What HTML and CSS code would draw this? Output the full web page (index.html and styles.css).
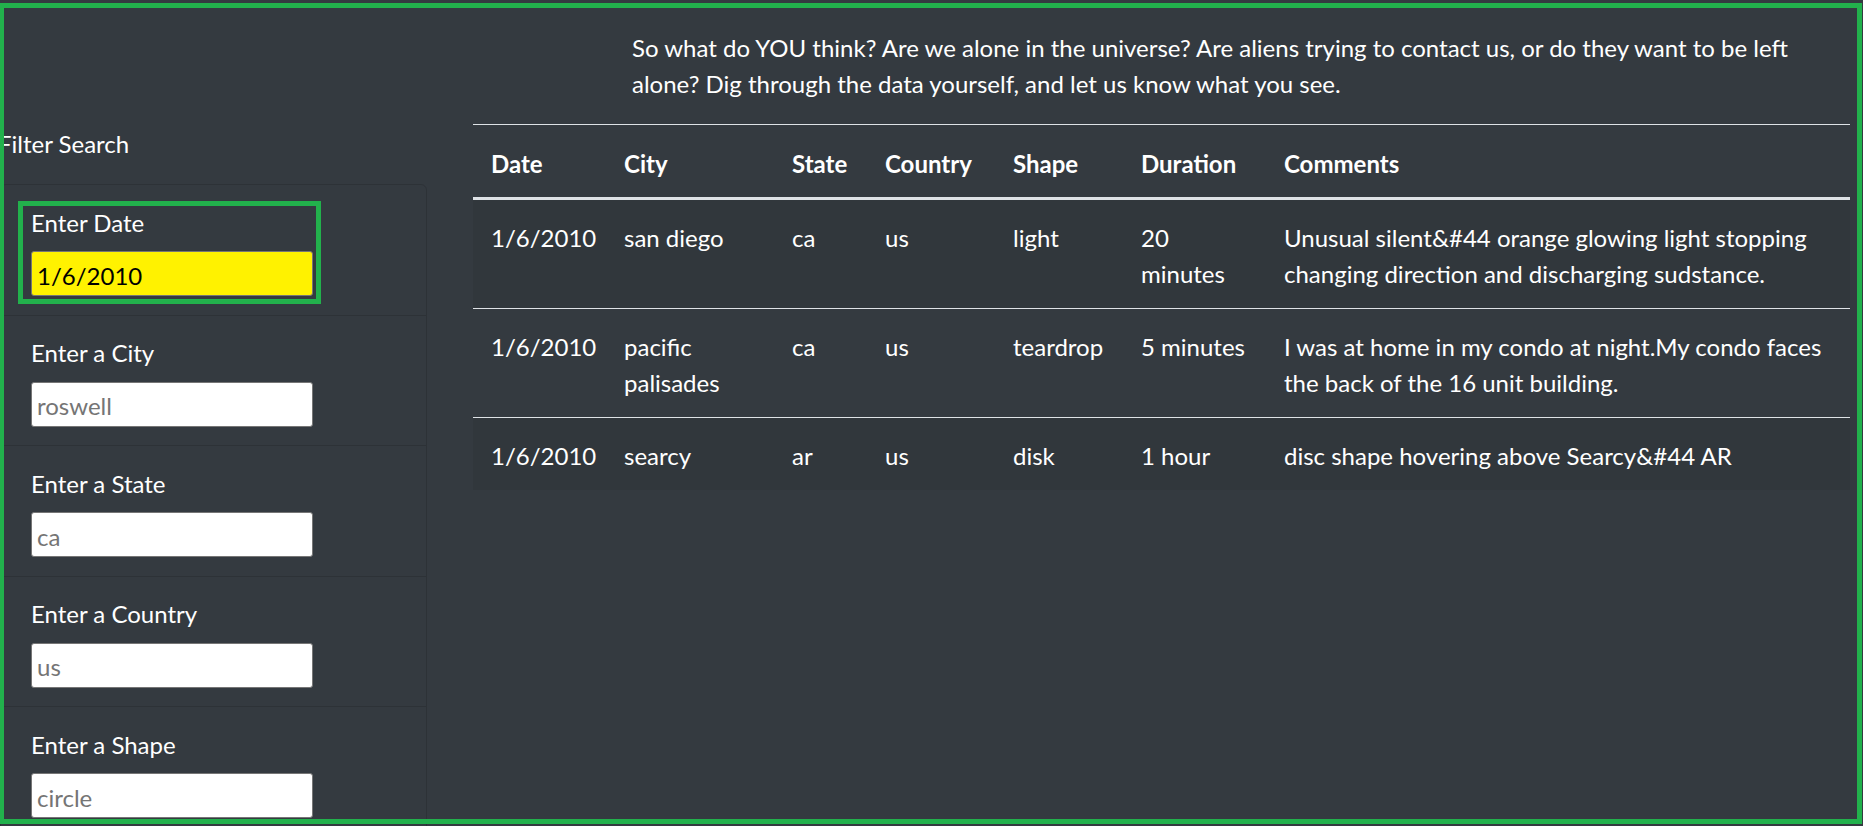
FILE: index.html
```html
<!DOCTYPE html>
<html lang="en">
<head>
<meta charset="utf-8">
<title>UFO Sightings</title>
<link rel="stylesheet" href="styles.css">
</head>
<body>
<div class="page">
  <aside class="sidebar">
    <p class="filter-title">Filter Search</p>
    <ul class="filters">
      <li class="filter filter-first">
        <label for="datetime">Enter Date</label>
        <input id="datetime" class="date-input" type="text" value="1/6/2010">
        <span class="highlight"></span>
      </li>
      <li class="filter">
        <label for="city">Enter a City</label>
        <input id="city" type="text" placeholder="roswell">
      </li>
      <li class="filter">
        <label for="state">Enter a State</label>
        <input id="state" type="text" placeholder="ca">
      </li>
      <li class="filter">
        <label for="country">Enter a Country</label>
        <input id="country" type="text" placeholder="us">
      </li>
      <li class="filter">
        <label for="shape">Enter a Shape</label>
        <input id="shape" type="text" placeholder="circle">
      </li>
    </ul>
  </aside>
  <main class="main">
    <p class="intro">So what do YOU think? Are we alone in the universe? Are aliens trying to contact us, or do they want to be left alone? Dig through the data yourself, and let us know what you see.</p>
    <table class="ufo-table">
      <colgroup>
        <col class="c-date"><col class="c-city"><col class="c-state"><col class="c-country"><col class="c-shape"><col class="c-duration"><col class="c-comments">
      </colgroup>
      <thead>
        <tr>
          <th>Date</th><th>City</th><th>State</th><th>Country</th><th>Shape</th><th>Duration</th><th>Comments</th>
        </tr>
      </thead>
      <tbody>
        <tr>
          <td>1/6/2010</td><td>san diego</td><td>ca</td><td>us</td><td>light</td><td>20 minutes</td><td>Unusual silent&amp;#44 orange glowing light stopping changing direction and discharging sudstance.</td>
        </tr>
        <tr>
          <td>1/6/2010</td><td>pacific palisades</td><td>ca</td><td>us</td><td>teardrop</td><td>5 minutes</td><td>I was at home in my condo at night.My condo faces the back of the 16 unit building.</td>
        </tr>
        <tr>
          <td>1/6/2010</td><td>searcy</td><td>ar</td><td>us</td><td>disk</td><td>1 hour</td><td>disc shape hovering above Searcy&amp;#44 AR</td>
        </tr>
      </tbody>
    </table>
  </main>
</div>
<div class="frame"></div>
</body>
</html>
```

FILE: styles.css
```css
* { box-sizing: border-box; }

html, body {
  margin: 0;
  height: 100%;
  overflow: hidden;
}

body {
  background: #343a40;
  color: #ffffff;
  font-family: Lato, "Open Sans", sans-serif;
  font-size: 24px;
  line-height: 36px;
}

.page {
  display: flex;
  align-items: flex-start;
}

.sidebar {
  width: 427px;
  flex: none;
  padding-top: 125.5px;
}

.filter-title {
  margin: 0 0 22.5px -2px;
}

.filters {
  list-style: none;
  margin: 0;
  padding: 0;
  border: 1px solid rgba(0, 0, 0, 0.13);
  border-radius: 6px;
}

.filter {
  position: relative;
  padding: 19.5px 30px 18.5px;
  border-top: 1px solid rgba(0, 0, 0, 0.13);
}

.filter-first {
  border-top: 0;
}

.filter label {
  display: block;
  margin-bottom: 10.5px;
}

.filter input {
  display: block;
  width: 282px;
  height: 45px;
  margin: 0;
  padding: 5px 5px 2px;
  border: 1px solid #767676;
  border-radius: 3px;
  background: #ffffff;
  color: #000000;
  font: inherit;
  line-height: 36px;
  outline: none;
}

.filter input::placeholder {
  color: #757575;
}

.filter .date-input {
  background: #fff200;
}

.highlight {
  position: absolute;
  left: 17px;
  top: 16px;
  width: 303px;
  height: 103px;
  border: 5px solid #22b14c;
  pointer-events: none;
}

.main {
  flex: none;
  width: 1377px;
  margin-left: 46px;
}

.intro {
  margin: 29.5px 0 22.5px;
  padding-left: 159px;
  width: 1350px;
}

.ufo-table {
  width: 1377px;
  table-layout: fixed;
  border-collapse: collapse;
}

.c-date { width: 133px; }
.c-city { width: 168px; }
.c-state { width: 93px; }
.c-country { width: 128px; }
.c-shape { width: 128px; }
.c-duration { width: 143px; }
.c-comments { width: 584px; }

.ufo-table th,
.ufo-table td {
  padding: 19.5px 18px 16.5px;
  text-align: left;
  vertical-align: top;
  border-top: 1.5px solid #dee2e6;
}

.ufo-table th {
  padding-top: 20.5px;
  padding-bottom: 15.5px;
  font-weight: 700;
  vertical-align: bottom;
  border-bottom: 3px solid #dee2e6;
}

.ufo-table tbody tr:nth-of-type(odd) {
  background: rgba(0, 0, 0, 0.05);
}

.frame {
  position: fixed;
  top: 3px;
  left: -1px;
  right: 1px;
  bottom: 2px;
  border: 5px solid #22b14c;
  pointer-events: none;
}
```
